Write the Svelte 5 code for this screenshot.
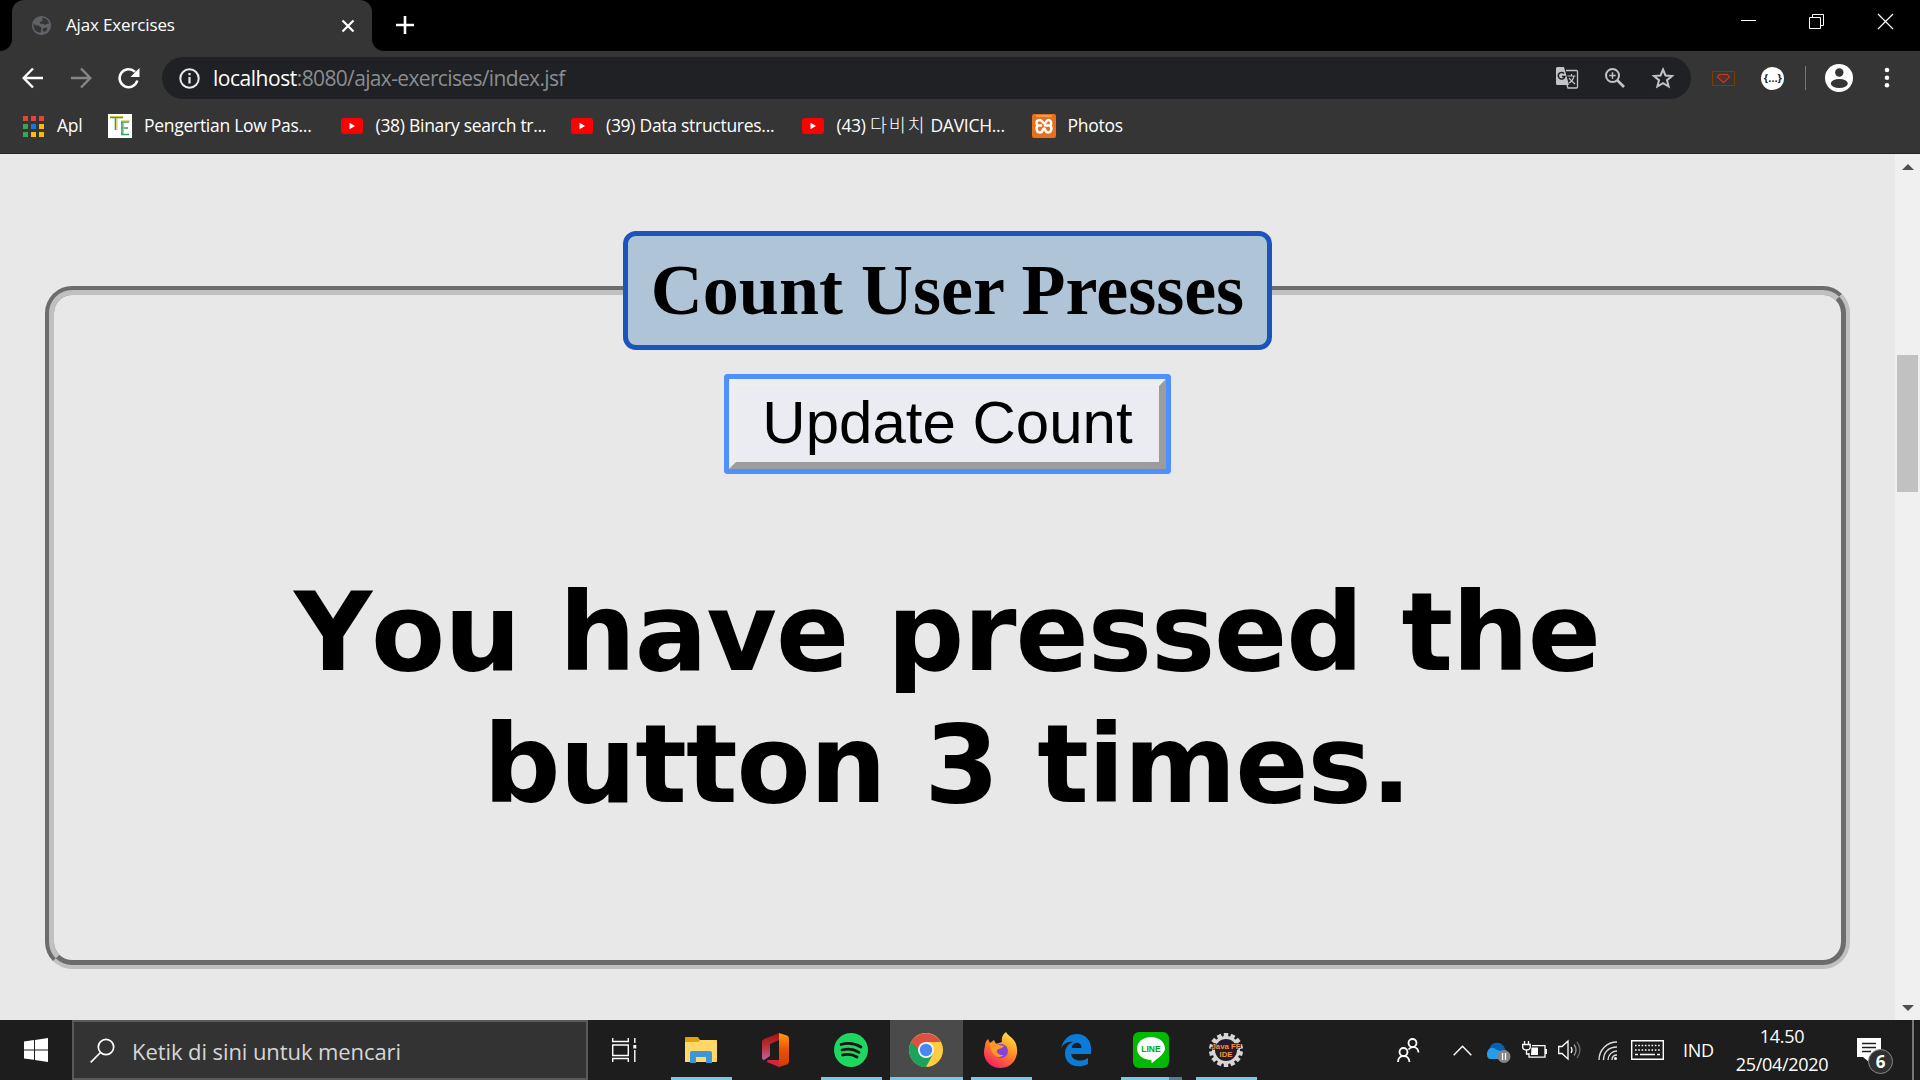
<script>
  const bookmarks = [
    { icon: 'te', label: 'Pengertian Low Pas...', cls: 'b1' },
    { icon: 'yt', label: '(38) Binary search tr...', cls: 'b2' },
    { icon: 'yt', label: '(39) Data structures...', cls: 'b3' },
    { icon: 'yt', label: '(43) ', hangul: '다비치', rest: ' DAVICH...', cls: 'b4' },
    { icon: 'xampp', label: 'Photos', cls: 'b5' }
  ];
  const grid = ['#ea4335', '#ea4335', '#ea4335', '#34a853', '#1a73e8', '#fbbc05', '#34a853', '#fbbc05', '#fbbc05'];
  const apps = [
    { id: 'explorer', open: true },
    { id: 'office', open: false },
    { id: 'spotify', open: true },
    { id: 'chrome', open: true, active: true },
    { id: 'firefox', open: true },
    { id: 'edge', open: false },
    { id: 'line', open: true, stacked: true },
    { id: 'java', open: true }
  ];
  const teeth = Array.from({ length: 14 }, (_, i) => (i * 360) / 14);
  let count = $state(3);
</script>

<div class="screen">
  <header class="tabs">
    <div class="tab">
      <svg class="favicon" width="21" height="21" viewBox="0 0 24 24"><circle cx="12" cy="12" r="11" fill="#5f6368" /><path d="M3 9c1 3 4 3 6 3 1 2 3 1 3 4l-1 4C6 20 2 16 3 9zM13 3c4 0 7 3 8 7-3-1-3 2-6 1-1-2-4 0-5-2 0-2 3-1 3-3zM14 15c2-1 4-1 5 0-1 2-2 4-4 4-2-1-2-2-1-4z" fill="#353535" /></svg>
      <span class="title">Ajax Exercises</span>
      <svg class="x" width="14" height="14" viewBox="0 0 14 14"><path d="M1.500 1.500l11 11M12.500 1.500l-11 11" stroke="#fff" stroke-width="2.200" /></svg>
    </div>
    <svg class="plus" width="18" height="18" viewBox="0 0 18 18"><path d="M9 0v18M0 9h18" stroke="#fff" stroke-width="2.600" /></svg>
    <div class="win">
      <svg width="15" height="15" viewBox="0 0 15 15"><path d="M0 6.500h15" stroke="#fff" /></svg>
      <svg width="15" height="15" viewBox="0 0 15 15" fill="none" stroke="#fff"><path d="M.5 3.500h11v11H.5zM3.500 3V.5h11v11H12" /></svg>
      <svg width="15" height="15" viewBox="0 0 15 15"><path d="M0 0l15 15M15 0L0 15" stroke="#fff" stroke-width="1.200" /></svg>
    </div>
  </header>

  <nav class="toolbar">
    <svg class="nav" width="22" height="22" viewBox="0 0 22 22" fill="none" stroke="#fff" stroke-width="2.400"><path d="M21 11H2.500M11 1.500L1.700 11l9.300 9.500" /></svg>
    <svg class="nav" width="22" height="22" viewBox="0 0 22 22" fill="none" stroke="#868686" stroke-width="2.400"><path d="M1 11h18.500M11 1.500L20.300 11 11 20.500" /></svg>
    <svg class="nav reload" width="22" height="22" viewBox="0 0 22 22"><path d="M19.300 13.500A9 9 0 1 1 17 4.800" fill="none" stroke="#fff" stroke-width="2.500" /><path d="M21.500 1v9h-9z" fill="#fff" /></svg>
    <div class="omnibox">
      <svg class="info" width="21" height="21" viewBox="0 0 21 21"><circle cx="10.500" cy="10.500" r="9.200" fill="none" stroke="#e8eaed" stroke-width="2" /><path d="M10.500 9v6.500M10.500 5v2.300" stroke="#e8eaed" stroke-width="2.200" /></svg>
      <span class="url"><b>localhost</b><i>:8080/ajax-exercises/index.jsf</i></span>
      <svg class="tr" width="22" height="22" viewBox="0 0 22 22"><path d="M10 3.500h10.500a1 1 0 0 1 1 1v15.500a1 1 0 0 1-1 1H12l-1-3" fill="none" stroke="#c3c4c6" stroke-width="1.300" /><path d="M1.500 0H8l5 18H1.500A1.500 1.500 0 0 1 0 16.500v-15A1.500 1.500 0 0 1 1.500 0z" fill="#c3c4c6" /><path d="M8 6.500a3.300 3.300 0 1 0 .8 3H6" fill="none" stroke="#202124" stroke-width="1.600" /><path d="M11.500 9h8M15.500 7v2M18 9c-1 4-3 6-5 7M13 11c1 2 4 4 6 6" fill="none" stroke="#c3c4c6" stroke-width="1.200" /></svg>
      <svg class="zm" width="20" height="20" viewBox="0 0 20 20" fill="none" stroke="#c3c4c6"><circle cx="7.500" cy="7.500" r="6.500" stroke-width="2" /><path d="M12 12l7 7" stroke-width="2.700" /><path d="M7.500 4.300v6.400M4.300 7.500h6.400" stroke-width="1.500" /></svg>
      <svg class="star" width="22" height="22" viewBox="0 0 22 22"><path d="M11 2.500l2.500 6 6.500.5-5 4.200 1.600 6.300-5.600-3.400-5.600 3.400L7 13.200 2 9l6.500-.5z" fill="none" stroke="#c3c4c6" stroke-width="2" /></svg>
    </div>
    <svg class="ext" width="23" height="15" viewBox="0 0 23 15" fill="none"><path d="M.5.5h22v14H.5z" stroke="#7a3d00" /><path d="M7.500 3.500h8l2 2.500-6 5.500L5.500 6z" stroke="#c23424" stroke-width="1.400" /><path d="M8.500 6.200h6L11.500 8.500z" stroke="#8c2a1c" stroke-width=".8" /></svg>
    <span class="json">{'{…}'}</span>
    <span class="rule"></span>
    <svg class="avatar" width="28" height="28" viewBox="0 0 28 28"><circle cx="14" cy="14" r="14" fill="#fff" /><circle cx="14.300" cy="8.500" r="4.200" fill="#353535" /><ellipse cx="14.300" cy="19.500" rx="8.500" ry="4.600" fill="#353535" /></svg>
    <svg class="dots" width="6" height="22" viewBox="0 0 6 22" fill="#fff"><circle cx="3" cy="3" r="2.300" /><circle cx="3" cy="10.700" r="2.300" /><circle cx="3" cy="18.300" r="2.300" /></svg>
  </nav>

  <div class="bookmarks">
    <div class="bm b0">
      <span class="ic grid">{#each grid as c}<span class="cell" style:background={c}></span>{/each}</span>
      <span class="tx">Apl</span>
    </div>
    {#each bookmarks as b}
      <div class="bm {b.cls}">
        <span class="ic">
          {#if b.icon === 'te'}
            <svg width="24" height="24" viewBox="0 0 24 24"><path fill="#fff" d="M0 0h24v24H0z" /><path d="M2 3.500h13M7.500 4v12M13 8h8M14 8v13M14 14h6M13 20.500h8" stroke="#3f9b5b" stroke-width="1.600" /><path d="M2 2.500h13M9 4v12M13 6.800h9M15.500 9v11" stroke="#d8c62c" stroke-width=".9" /></svg>
          {:else if b.icon === 'yt'}
            <svg width="22" height="16" viewBox="0 0 22 16"><rect width="22" height="16" rx="3" fill="#f00" /><path d="M8.500 4.700v6.600L14 8z" fill="#fff" /></svg>
          {:else}
            <svg width="24" height="24" viewBox="0 0 24 24"><rect width="24" height="24" rx="2" fill="#e8701c" /><path d="M4 2h16" stroke="#f6c59c" /><path d="M5.500 11.500C3.500 9 4.500 6 7.500 6S11 9.500 12.500 9.500 14 6 16.500 6 20 9 18.500 11.500H13M18.500 11.500c2 3 .5 7-2.500 7s-2.500-4-4-4-1 4-4 4-4.500-4-2.500-7H9" fill="none" stroke="#fff" stroke-width="2.500" stroke-linecap="round" /></svg>
          {/if}
        </span>
        <span class="tx">{b.label}{#if b.hangul}<span class="hangul">{b.hangul}</span>{b.rest}{/if}</span>
      </div>
    {/each}
  </div>

  <div class="view">
    <main>
      <fieldset>
        <legend>Count User Presses</legend>
        <button onclick={() => (count += 1)}>Update Count</button>
        <h1>You have pressed the<br />button {count} times.</h1>
      </fieldset>
    </main>
    <aside class="scroll">
      <svg width="12" height="6" viewBox="0 0 12 6"><path d="M6 0l6 6H0z" fill="#505050" /></svg>
      <span class="thumb"></span>
      <svg width="12" height="6" viewBox="0 0 12 6"><path d="M6 6L0 0h12z" fill="#505050" /></svg>
    </aside>
  </div>

  <footer>
    <div class="start"><svg width="24" height="24" viewBox="0 0 24 24" fill="#fff"><path d="M0 3.500l10-1.400v9.300H0zM11 2l13-2v11.400H11zM0 12.500h10v9.300L0 20.500zM11 12.500h13V24l-13-1.900z" /></svg></div>
    <div class="search">
      <svg width="25" height="25" viewBox="0 0 25 25" fill="none" stroke="#fff" stroke-width="1.700"><circle cx="16" cy="9" r="7.700" /><path d="M10.500 14.500L.7 24.300" /></svg>
      <span>Ketik di sini untuk mencari</span>
    </div>
    <div class="tv"><svg width="25" height="24" viewBox="0 0 25 24" fill="none" stroke="#fff" stroke-width="1.400"><path d="M.7 0v3.500h15.600V0M.7 7h15.600v10.500H.7zM.7 24v-3.500h15.600V24M22.800 0v5M22.800 12v12" /><path d="M21.300 7h3v3.500h-3z" fill="#fff" stroke="none" /></svg></div>
    {#each apps as a}
      <div class="app" class:active={a.active} class:open={a.open} class:stacked={a.stacked}>
        {#if a.id === 'explorer'}
          <svg width="34" height="36" viewBox="0 0 34 36"><path d="M1 6q0-1 1-1h12l2 3h16q1 0 1 1v20H1z" fill="#e0a20c" /><path d="M1 10h13l2-2h16q1 0 1 1v20q0 1-1 1H1z" fill="#ffd868" /><path d="M6 31V21q0-2 2-2h18q2 0 2 2v10h-6v-6H12v6z" fill="#3d96d8" /></svg>
        {:else if a.id === 'office'}
          <svg width="28" height="34" viewBox="0 0 28 34"><defs><linearGradient id="og" x1="0" y1="0" x2="0" y2="1"><stop offset="0" stop-color="#a80f0c" /><stop offset=".5" stop-color="#b83238" /><stop offset="1" stop-color="#c9609c" /></linearGradient><linearGradient id="oh" x1="0" y1="0" x2="0" y2="1"><stop offset="0" stop-color="#ff9a10" /><stop offset=".5" stop-color="#e85208" /><stop offset="1" stop-color="#d23a06" /></linearGradient></defs><path d="M0 9q0-2 2-3L17 0v7L8 11v12L2 27q-2 0-2-3z" fill="url(#og)" /><path d="M17 0l8 2.500q2 .8 2 3v23q0 2-2 3L17 34z" fill="url(#oh)" /><path d="M6 27h11v7L5 29q-1-1 1-2z" fill="#d82438" /></svg>
        {:else if a.id === 'spotify'}
          <svg width="34" height="36" viewBox="0 0 34 36"><circle cx="17" cy="18" r="17" fill="#1ed760" /><path d="M7 12.500c7-2 14-1 20 2.500M8 18c6-1.600 12-.8 17 2.300M8.500 23c5-1.300 10-.7 14.500 2" fill="none" stroke="#191414" stroke-linecap="round" stroke-width="2.700" /></svg>
        {:else if a.id === 'chrome'}
          <svg width="34" height="36" viewBox="0 0 34 36"><circle cx="17" cy="18" r="17" fill="#fc4" /><path d="M17 18L2.300 9.500A17 17 0 0 0 17 35l7-13z" fill="#1da25c" /><path d="M17 18h-7.500L2.300 9.500A17 17 0 0 1 31.700 10H17z" fill="#dd5044" /><circle cx="17" cy="18" r="8" fill="#f3f3f3" /><circle cx="17" cy="18" r="6.200" fill="#4688f4" /></svg>
        {:else if a.id === 'firefox'}
          <svg width="36" height="38" viewBox="0 0 36 38"><defs><linearGradient id="ff" x1=".8" y1="0" x2=".2" y2="1"><stop offset="0" stop-color="#ffe843" /><stop offset=".45" stop-color="#ff8a25" /><stop offset="1" stop-color="#f5156c" /></linearGradient></defs><path d="M23 1c2 4 8 6 10 12 4 12-3 24-15 24S-2 27 2 15c0-3 1-5 3-7l2 4 4-3 2 4 6-2c-1-4 1-8 4-10z" fill="url(#ff)" /><circle cx="18" cy="20" r="7" fill="#8243d8" /><path d="M7 12c4-1 7 1 9 2l5 1c-2 3-5 2-7 4-1 3 3 6 7 5-6 5-14 0-14-12z" fill="#ff9a2a" /></svg>
        {:else if a.id === 'edge'}
          <svg width="30" height="33" viewBox="0 0 30 33"><path d="M0 14C3 4 9 0 16 0c9 0 14 7 14 14v6H10c1 6 9 9 17 4v6C17 35 4 32 4 19c0-5 3-9 8-11C6 7 2 11 0 14zM10.500 14h10c0-7-9-7-10 0z" fill="#0b7bd8" /></svg>
        {:else if a.id === 'line'}
          <svg width="36" height="36" viewBox="0 0 36 36"><rect width="36" height="36" rx="6" fill="#00b900" /><path d="M18 5c8 0 14 5 14 11.500 0 5-6 9-13 14.500-1 0 0-3-1-3-8 0-14-5-14-11.500S10 5 18 5z" fill="#fff" /><text x="18" y="20" text-anchor="middle" class="linetext">LINE</text></svg>
        {:else}
          <svg width="36" height="36" viewBox="0 0 36 36">{#each teeth as t}<rect x="15.800" y="1" width="4.400" height="6" fill="#d6d6d6" transform="rotate({t} 18 18)" />{/each}<circle cx="18" cy="18" r="12.500" fill="#241c2c" stroke="#d6d6d6" stroke-width="3" /><text x="18" y="16.500" text-anchor="middle" class="jt">Java FF</text><text x="18" y="25" text-anchor="middle" class="jt">IDE</text></svg>
        {/if}
      </div>
    {/each}
    <div class="tray">
      <svg class="people" width="23" height="25" viewBox="0 0 23 25" fill="none" stroke="#fff" stroke-width="1.800"><circle cx="15.500" cy="5" r="4" /><circle cx="6.500" cy="14" r="4" /><path d="M1 24c0-8 11-8 11.500 0M11.500 11.500c3-4 9.500-3 10 3" /></svg>
      <svg class="chev" width="19" height="11" viewBox="0 0 19 11"><path d="M.7 10.300L9.500 1.300l8.800 9" fill="none" stroke="#fff" stroke-width="1.400" /></svg>
      <svg class="drive" width="25" height="21" viewBox="0 0 25 21"><path d="M4 14a5 5 0 0 1 0-8A8 8 0 0 1 18 5l2 4-3 7H5z" fill="#0b6fc8" /><path d="M1 12c0-5 5-8 9-5l11 6-4 4H5c-3 0-4-2-4-5z" fill="#299be8" /><path d="M4 5A8 8 0 0 1 18 5l1 4-8-1C9 6 6 5 4 5z" fill="#0862b1" /><circle cx="18" cy="14.500" r="6.500" fill="#858585" /><path d="M16.500 11v7M19.500 11v7" stroke="#fff" stroke-width="1.300" /></svg>
      <svg class="bat" width="25" height="18" viewBox="0 0 25 18" fill="none" stroke="#fff" stroke-width="1.300"><path d="M10 4.700h13v11.500H7V12M24.300 8v5M2.500 0v3M6.500 0v3M.7 3.500h7.500v3Q8 9 4.500 9T.7 6.500zM4.500 9v4H7" /><path d="M9.500 6.500H16V14H9z" fill="#fff" stroke="none" /></svg>
      <svg class="vol" width="24" height="20" viewBox="0 0 24 20" fill="none" stroke="#fff" stroke-width="1.300"><path d="M.7 6.500H4L10 1v18l-6-5.500H.7z" /><path d="M13 7q2 3 0 6" /><path d="M16 4.500q4 5.500 0 11" stroke="#999" /><path d="M19 2q6 8 0 16" stroke="#666" /></svg>
      <svg class="wifi" width="20" height="20" viewBox="0 0 20 20" fill="none" stroke="#ddd" stroke-width="1.400"><path d="M1 19C1 9 9 1 19 1M5.500 19C5.500 11 11 6 19 6M10 19c0-5 4-9 9-9M14 19c0-3 2-5 5-5" /><circle cx="17.500" cy="17.500" r="1.500" fill="#fff" stroke="none" /></svg>
      <svg class="kbd" width="33" height="20" viewBox="0 0 33 20" fill="none" stroke="#fff" stroke-width="1.400"><path d="M.7.700h31.600v18.600H.7z" /><path d="M4 5.500h25M4 10h25" stroke-dasharray="1.600 1.700" /><path d="M4 14.500h3M9 14.500h15M26 14.500h3" /></svg>
      <span class="lang">IND</span>
      <div class="clock"><span class="time">14.50</span><span class="date">25/04/2020</span></div>
      <div class="note">
        <svg width="24" height="25" viewBox="0 0 24 25"><path d="M0 0h24v19H12v5l-6-5H0z" fill="#fff" /><path d="M5 5.500h14M5 9.500h14M5 13.500h9" stroke="#1d1d1d" stroke-width="1.300" /></svg>
        <span class="badge">6</span>
      </div>
      <span class="edge"></span>
    </div>
  </footer>
</div>

<style>
  :global(body) { margin: 0; overflow: hidden; }
  .screen { width: 1920px; height: 1080px; display: flex; flex-direction: column; font-family: "Open Sans", "Noto Sans", "Noto Sans CJK KR", sans-serif; color: #fff; background: #353535; overflow: hidden; }
  svg { display: block; flex: none; overflow: visible; }
  span { white-space: nowrap; }
  .tabs { height: 51px; background: #000; display: flex; align-items: center; box-sizing: border-box; padding-left: 12px; flex: none; }
  .tab { position: relative; width: 360px; height: 51px; background: #353535; border-radius: 12px 12px 0 0; display: flex; align-items: center; box-sizing: border-box; padding: 0 17px 0 19px; }
  .tab::before, .tab::after { content: ""; position: absolute; bottom: 0; width: 12px; height: 12px; }
  .tab::before { left: -12px; background: radial-gradient(circle at 0 0, #000 11.500px, #353535 12.500px); }
  .tab::after { right: -12px; background: radial-gradient(circle at 100% 0, #000 11.500px, #353535 12.500px); }
  .favicon { margin-bottom: 1px; }
  .title { margin-left: 14px; font-size: 17px; letter-spacing: -0.15px; flex: 1; padding-bottom: 2px; }
  .plus { margin: 0 0 1px 24px; }
  .win { margin: 0 27px 8px auto; display: flex; gap: 54px; }
  .win svg:nth-child(2) { margin-left: -1px; }
  .toolbar { height: 54px; flex: none; display: flex; align-items: center; padding-left: 22px; box-sizing: border-box; }
  .nav { margin-right: 26.300px; }
  .reload { margin: 0 27.300px 0 -1px; }
  .omnibox { width: 1529px; height: 42px; margin-left: -4.500px; border-radius: 21px; background: #202124; display: flex; align-items: center; box-sizing: border-box; padding: 0 17px 0 17px; }
  .url { flex: 1; margin-left: 12.500px; font-size: 21px; }
  .url b { font-weight: 400; letter-spacing: -0.45px; }
  .url i { font-style: normal; color: #8b8d90; letter-spacing: -0.65px; }
  .zm { margin: 0 27px 0 27px; }
  .ext { margin-left: 21px; }
  .json { margin-left: 26px; width: 23px; height: 23px; border-radius: 50%; background: #fff; color: #222; font-size: 11px; font-weight: 700; line-height: 21px; text-align: center; }
  .rule { width: 1px; height: 24px; background: #777; margin-left: 21px; }
  .avatar { margin-left: 19px; }
  .dots { margin-left: 31px; }
  .bookmarks { height: 49px; flex: none; box-sizing: border-box; padding: 0 0 6px 23px; display: flex; align-items: center; border-bottom: 1px solid #262626; }
  .bm { display: flex; align-items: center; flex: none; font-size: 17.500px; height: 24px; line-height: 24px; }
  .ic { display: flex; justify-content: flex-start; flex: none; }
  .grid { display: grid; grid-template-columns: repeat(3, 5px); gap: 3px; width: 21px; }
  .cell { width: 5px; height: 5px; }
  .b0 { width: 85px; } .b0 .ic { width: 34px; }
  .b1 { width: 232.500px; } .b1 .ic { width: 36px; }
  .b2, .b3 { width: 230.500px; } .b2 .ic, .b3 .ic, .b4 .ic { width: 35px; }
  .b4 { width: 230.500px; } .b5 .ic { width: 35.500px; }
  .tx { letter-spacing: -0.28px; padding-bottom: 2px; white-space: pre; }
  .hangul { font-family: "Noto Sans CJK KR", sans-serif; font-size: 18.500px; font-weight: 300; letter-spacing: 1.700px; line-height: 20px; }
  .view { flex: 1; min-height: 0; display: flex; background: #e8e8e8; }
  main { flex: 1; display: flex; justify-content: center; padding-top: 77px; font-family: "Liberation Serif", serif; color: #000; }
  fieldset { width: 1805px; height: 738px; box-sizing: border-box; margin: 0 0 0 -1px; padding: 0; border: 9px groove #c0c0c0; border-radius: 27px; text-align: center; }
  legend { box-sizing: border-box; width: 649px; height: 119px; margin: 0 auto; padding: 0 0 0 1px; border: 5px solid #1a55bb; border-radius: 13px; background: #b0c4d8; font-size: 72px; font-weight: 700; line-height: 109px; white-space: nowrap; }
  button { display: block; margin: 29px auto 0; width: 437px; height: 90px; box-sizing: border-box; padding: 0 0 2px 1px; border: 7px solid; border-color: #eeeeef #9c9c9c #9c9c9c #eeeeef; background: #ebecf2; box-shadow: 0 0 0 5px #4d90fe; border-radius: 1px; font: 60px "Liberation Sans", sans-serif; line-height: 74px; color: #000; white-space: nowrap; }
  h1 { margin: 98px 0 0; font: 700 108px/132px "DejaVu Sans", sans-serif; font-kerning: none; letter-spacing: -1.050px; word-spacing: 2.300px; white-space: nowrap; }
  .scroll { width: 25px; background: #f0f0f0; display: flex; flex-direction: column; align-items: center; padding: 10px 0 9px; box-sizing: border-box; }
  .thumb { width: 21px; height: 137px; background: #c1c1c1; margin: 185px 0 auto; }
  footer { height: 60px; flex: none; background: #1d1d1d; display: flex; }
  .start { width: 72px; display: flex; align-items: center; justify-content: center; }
  .search { width: 516px; box-sizing: border-box; border: 2px solid #5a5a5a; background: #333; display: flex; align-items: center; padding-left: 16px; color: #d6d6d6; font-size: 22px; }
  .search span { margin-left: 17px; letter-spacing: -0.080px; padding-top: 1px; }
  .tv { width: 76px; display: flex; align-items: center; justify-content: center; padding-right: 3px; box-sizing: border-box; }
  .app { width: 73px; margin: 0 1px; display: flex; align-items: center; justify-content: center; position: relative; box-sizing: border-box; padding-right: 2px; }
  .open::after { content: ""; position: absolute; left: 6px; right: 6px; bottom: 0; height: 3px; background: #76c9ee; }
  .active { background: #4a4a4a; }
  .active::after { left: 0; right: 0; }
  .stacked::after { background: linear-gradient(90deg, #76c9ee 48px, #4c7f98 48px); }
  .linetext { font: 700 8.500px "Liberation Sans", sans-serif; fill: #00a900; }
  .jt { font: 700 7.800px "Liberation Sans", sans-serif; fill: #f59338; stroke: #241c2c; stroke-width: 1.500px; paint-order: stroke; }
  .tray { margin-left: auto; display: flex; align-items: center; width: 523px; }
  .chev { margin-left: 33px; }
  .drive { margin-left: 14px; margin-top: 4px; }
  .bat { margin-left: 11px; }
  .vol { margin-left: 11px; }
  .wifi { margin-left: 16px; margin-top: 2px; }
  .kbd { margin-left: 13px; }
  .lang { margin-left: 19px; width: 32px; font-size: 18px; letter-spacing: -0.3px; }
  .clock { width: 96px; margin-left: 19px; display: flex; flex-direction: column; align-items: center; font-size: 18px; line-height: 28px; }
  .time, .date { letter-spacing: -0.3px; }
  .note { position: relative; margin-left: 27px; }
  .badge { position: absolute; left: 11px; top: 11px; width: 23px; height: 23px; border: 1px solid #888; border-radius: 50%; background: #303030; font-size: 17px; font-weight: 700; line-height: 23px; text-align: center; }
  .edge { width: 2px; height: 60px; background: #777; margin-left: auto; margin-right: 6px; }
</style>
